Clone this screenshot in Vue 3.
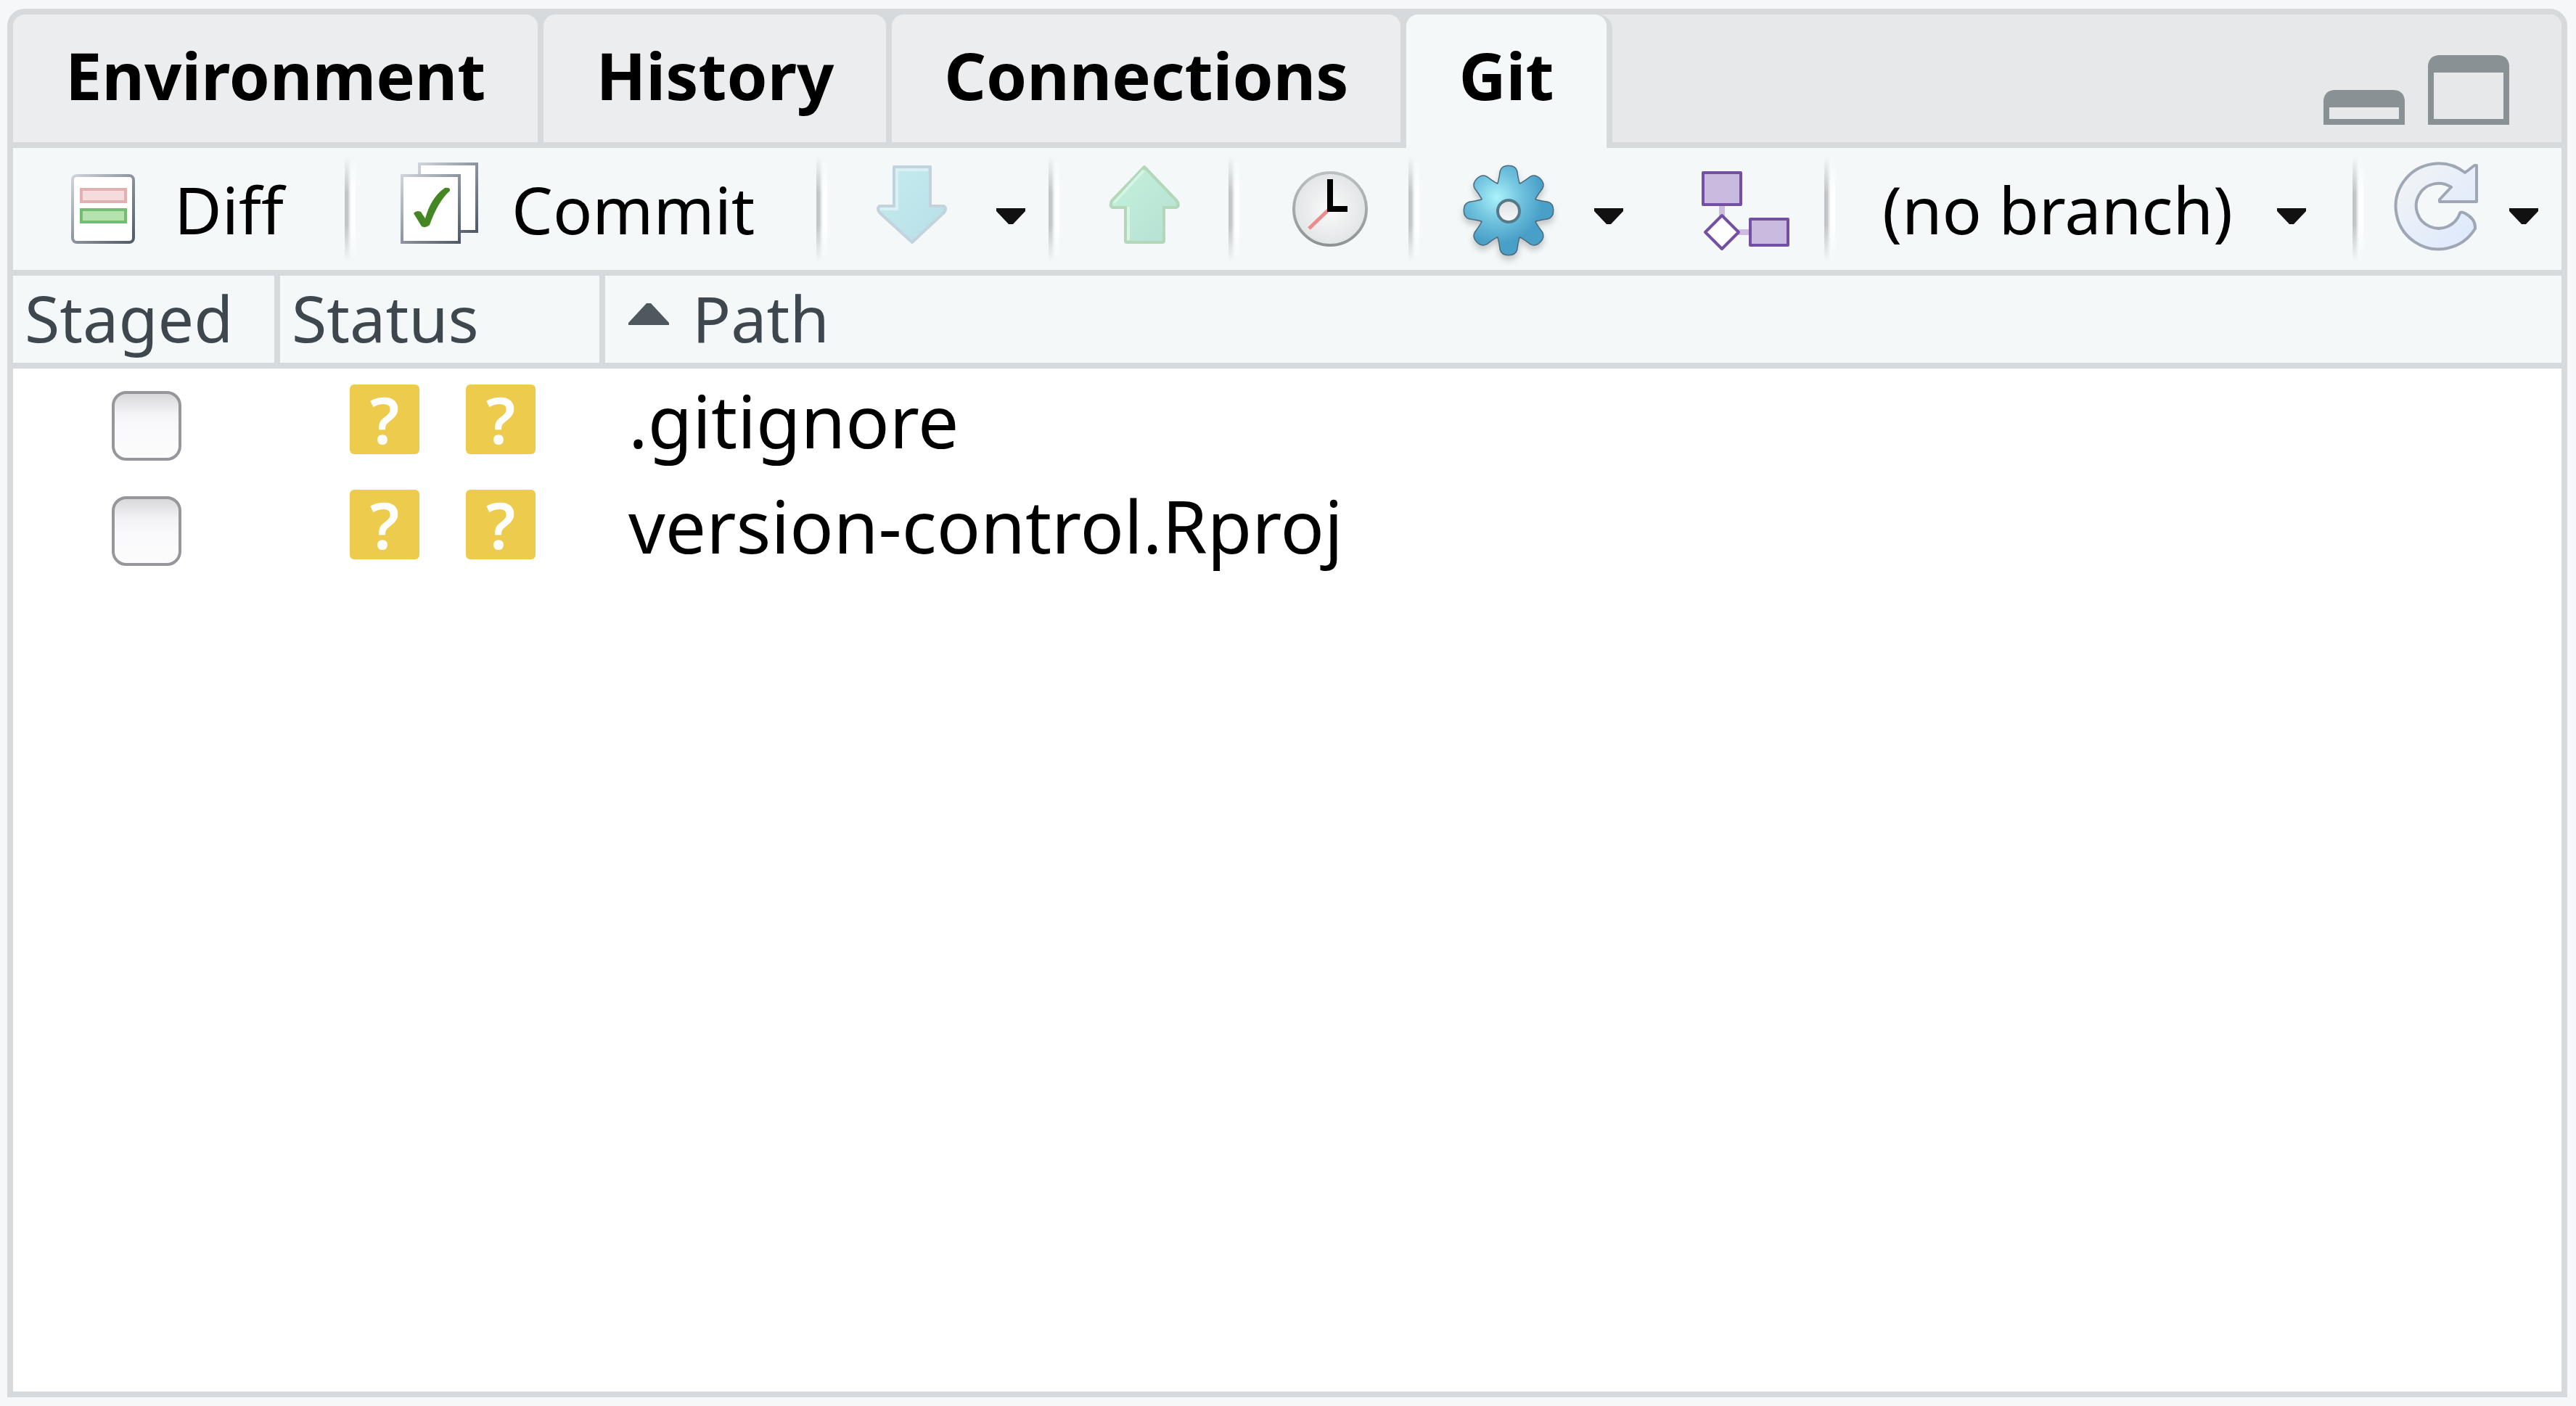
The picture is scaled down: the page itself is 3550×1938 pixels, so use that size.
<script setup>
import { ref } from 'vue'

const tabs = ['Environment', 'History', 'Connections', 'Git']
const active = ref('Git')

const files = ref([
  { path: '.gitignore', staged: false },
  { path: 'version-control.Rproj', staged: false },
])

const teeth = [0, 45, 90, 135, 180, 225, 270, 315]
const tooth = 'M-16 -34 L-14 -38 Q-12 -46 -11 -54 Q-9 -61 0 -61 Q9 -61 11 -54 Q12 -46 14 -38 L16 -34 Z'
</script>

<template>
  <main class="page">
    <section class="panel">
      <header class="strip">
        <nav class="tabs" role="tablist">
          <button
            v-for="tab in tabs"
            :key="tab"
            type="button"
            role="tab"
            class="tab"
            :class="{ active: tab === active }"
            :aria-selected="tab === active"
            @click="active = tab"
          >{{ tab }}</button>
        </nav>
        <div class="window-buttons">
          <button type="button" aria-label="Minimize">
            <svg width="112" height="96" viewBox="0 0 112 96">
              <path fill="#8a9194" fill-rule="evenodd" d="M0 96V62Q2 48 16 48H96Q110 48 112 62V96ZM8 72V88H104V72Z" />
            </svg>
          </button>
          <button type="button" aria-label="Maximize">
            <svg width="112" height="96" viewBox="0 0 112 96">
              <path fill="#8a9194" fill-rule="evenodd" d="M0 96V14Q2 0 16 0H96Q110 0 112 14V96ZM8 24V88H104V24Z" />
            </svg>
          </button>
        </div>
      </header>

      <div class="toolbar" role="toolbar">
        <div class="group">
          <button type="button" class="tool labelled diff">
            <svg class="icon" viewBox="72 224 128 128">
              <defs>
                <linearGradient id="edge" x1="0" y1="0" x2="1" y2="1">
                  <stop offset="0" stop-color="#d0d4da" />
                  <stop offset="0.5" stop-color="#8d949f" />
                  <stop offset="1" stop-color="#505a68" />
                </linearGradient>
              </defs>
              <rect x="100" y="242" width="84" height="92" rx="6" fill="#fff" stroke="url(#edge)" stroke-width="4" />
              <rect x="112" y="261" width="61" height="17" fill="#f5dcdc" stroke="#e2b0b0" stroke-width="4" />
              <rect x="112" y="289" width="61" height="17" fill="#b5e3ad" stroke="#74bb74" stroke-width="4" />
            </svg>
            <span>Diff</span>
          </button>
        </div>
        <i class="separator" />

        <div class="group">
          <button type="button" class="tool labelled commit">
            <svg class="icon" viewBox="537 224 128 128">
              <rect x="578" y="226" width="79" height="93" fill="#fff" stroke="url(#edge)" stroke-width="4" />
              <rect x="554" y="242" width="79" height="92" fill="#fff" stroke="url(#edge)" stroke-width="4" />
              <path fill="#448722" d="M570 294Q574 289 580 292L586 301Q594 272 613 259Q621 258 620 263Q604 277 592 310Q587 315 581 312Z" />
            </svg>
            <span>Commit</span>
          </button>
        </div>
        <i class="separator" />

        <div class="group pull">
          <button type="button" class="tool" aria-label="Pull">
            <svg class="icon" viewBox="1193 224 128 128">
              <defs>
                <linearGradient id="pull-fill" x1="0" y1="0" x2="1" y2="1">
                  <stop offset="0" stop-color="#c6ecf0" />
                  <stop offset="1" stop-color="#b6dfe6" />
                </linearGradient>
              </defs>
              <path d="M1232 230H1282V284H1301Q1305 287 1301 293L1257 334L1212 293Q1208 287 1212 284H1232Z" fill="url(#pull-fill)" stroke="#c3d3dd" stroke-width="4" stroke-linejoin="round" />
              <path d="M1213 288H1236V234H1279" fill="none" stroke="#d9f1f4" stroke-width="4" />
            </svg>
          </button>
          <button type="button" class="tool" aria-label="Pull options">
            <svg class="caret" viewBox="0 224 40 128"><path d="M0 287H40V291L23 309H17L0 291Z" /></svg>
          </button>
        </div>
        <i class="separator" />

        <div class="group single">
          <button type="button" class="tool" aria-label="Push">
            <svg class="icon" viewBox="1513 224 128 128">
              <defs>
                <linearGradient id="push-fill" x1="0" y1="0" x2="1" y2="1">
                  <stop offset="0" stop-color="#c4f1dc" />
                  <stop offset="1" stop-color="#b6e0d3" />
                </linearGradient>
              </defs>
              <path d="M1577 230L1622 277Q1626 284 1621 286H1604V332Q1604 334 1602 334H1553Q1551 334 1551 332V286H1533Q1529 284 1532 277Z" fill="url(#push-fill)" stroke="#b2d7b9" stroke-width="4" stroke-linejoin="round" />
              <path d="M1576 235L1535 280M1555 285V331" fill="none" stroke="#d4f5e4" stroke-width="4" />
            </svg>
          </button>
        </div>
        <i class="separator" />

        <div class="group single">
          <button type="button" class="tool" aria-label="History">
            <svg class="icon" viewBox="1761 224 128 128">
              <defs>
                <radialGradient id="clock-fill">
                  <stop offset="0" stop-color="#fafafa" />
                  <stop offset="1" stop-color="#e2e5e6" />
                </radialGradient>
                <linearGradient id="clock-edge" x1="0" y1="0" x2="0" y2="1">
                  <stop offset="0" stop-color="#bcc0c1" />
                  <stop offset="1" stop-color="#8f9394" />
                </linearGradient>
              </defs>
              <circle cx="1833" cy="288" r="50" fill="url(#clock-fill)" stroke="url(#clock-edge)" stroke-width="4" />
              <path d="M1831 289L1804 315" stroke="#ea8c8c" stroke-width="5" />
              <path d="M1833 247V288H1857" fill="none" stroke="#000" stroke-width="8" />
            </svg>
          </button>
        </div>
        <i class="separator" />

        <div class="group more">
          <button type="button" class="tool" aria-label="More">
            <svg class="icon" viewBox="2017 224 128 128">
              <defs>
                <radialGradient id="gear-fill" gradientUnits="userSpaceOnUse" cx="-16" cy="-18" r="64">
                  <stop offset="0" stop-color="#abf3fb" />
                  <stop offset="0.5" stop-color="#73c4df" />
                  <stop offset="1" stop-color="#489fc8" />
                </radialGradient>
                <linearGradient id="hole-fill" x1="0" y1="0" x2="0" y2="1">
                  <stop offset="0" stop-color="#dadddf" />
                  <stop offset="1" stop-color="#fbfbfb" />
                </linearGradient>
              </defs>
              <g transform="translate(2079 290)">
                <g class="gear-shadow" fill="#4a6b7c" stroke="#4a6b7c" stroke-width="3" stroke-linejoin="round">
                  <circle r="40" />
                  <path v-for="a in teeth" :key="a" :d="tooth" :transform="`rotate(${a})`" />
                </g>
                <mask id="gear-shape">
                  <circle r="39" fill="#fff" />
                  <path v-for="a in teeth" :key="a" :d="tooth" fill="#fff" :transform="`rotate(${a})`" />
                </mask>
                <rect x="-64" y="-64" width="128" height="128" fill="url(#gear-fill)" mask="url(#gear-shape)" />
                <circle cy="1" r="15" fill="url(#hole-fill)" stroke="#56798a" stroke-width="4" />
              </g>
            </svg>
          </button>
          <button type="button" class="tool" aria-label="More options">
            <svg class="caret" viewBox="0 224 40 128"><path d="M0 287H40V291L23 309H17L0 291Z" /></svg>
          </button>
          <button type="button" class="tool new-branch" aria-label="New branch">
            <svg class="icon" viewBox="2342 224 128 128">
              <path d="M2374 284V300M2394 320H2412" stroke="#cbbce0" stroke-width="8" />
              <g fill="#c9badf" stroke="#7450a3" stroke-width="4" stroke-linejoin="round">
                <rect x="2348" y="238" width="52" height="44" />
                <rect x="2413" y="302" width="52" height="36" />
                <path fill="#fff" d="M2374 297L2397 320L2374 343L2351 320Z" />
              </g>
            </svg>
          </button>
        </div>
        <i class="separator" />

        <div class="group branch">
          <select id="branch" class="branch-select" aria-label="Branch">
            <option>(no branch)</option>
          </select>
          <label for="branch" class="caret-label">
            <svg class="caret" viewBox="0 224 40 128"><path d="M0 287H40V291L23 309H17L0 291Z" /></svg>
          </label>
        </div>
        <i class="separator" />

        <div class="group refresh">
          <button type="button" class="tool" aria-label="Refresh">
            <svg class="icon" viewBox="148 224 128 128">
              <defs>
                <linearGradient id="refresh-fill" x1="0" y1="0" x2="1" y2="1">
                  <stop offset="0" stop-color="#f3f5f5" />
                  <stop offset="1" stop-color="#dce8fd" />
                </linearGradient>
              </defs>
              <path d="M247 238A59 59 0 1 0 261 315Q262 302 247 294Q241 291 240 294A31 31 0 1 1 228 258L212 275V278H263V228H260L247 238Z" fill="url(#refresh-fill)" stroke="#a0a7b4" stroke-width="4" stroke-linejoin="round" />
            </svg>
          </button>
          <button type="button" class="tool" aria-label="Refresh options">
            <svg class="caret" viewBox="0 224 40 128"><path d="M0 287H40V291L23 309H17L0 291Z" /></svg>
          </button>
        </div>
      </div>

      <table class="files">
        <colgroup>
          <col class="col-staged" />
          <col class="col-status" />
          <col />
        </colgroup>
        <thead>
          <tr>
            <th scope="col">Staged</th>
            <th scope="col">Status</th>
            <th scope="col" class="sorted" aria-sort="ascending">
              <svg width="56" height="30" viewBox="0 0 56 30"><path fill="#50585f" d="M25 0H31L56 27V30H0V27Z" /></svg>Path
            </th>
          </tr>
        </thead>
        <tbody>
          <tr v-for="file in files" :key="file.path">
            <td class="staged">
              <input v-model="file.staged" type="checkbox" :aria-label="`Stage ${file.path}`" />
            </td>
            <td class="status">
              <div class="badges"><span>?</span><span>?</span></div>
            </td>
            <td class="path">{{ file.path }}</td>
          </tr>
        </tbody>
      </table>
    </section>
  </main>
</template>

<style>
body {
  margin: 0;
  background: #f6f7f9;
}
</style>

<style scoped>
.page {
  --line: #d6dadc;
  --surface: #f4f8f9;
  box-sizing: border-box;
  display: flex;
  min-height: 100vh;
  padding: 12px 12px 12px 10px;
  font-family: "Noto Sans", "Open Sans", sans-serif;
  color: #000;
}

.panel {
  flex: 1;
  min-width: 0;
  border: 8px solid var(--line);
  border-radius: 24px 24px 0 0;
  background: #fff;
  overflow: hidden;
}

button {
  margin: 0;
  padding: 0;
  border: 0;
  background: none;
  font: inherit;
  color: inherit;
}

svg {
  display: block;
}

.strip {
  display: flex;
  justify-content: space-between;
  height: 184px;
  background: #e6e8ea;
  box-shadow: inset 0 -8px var(--line);
}

.tabs {
  display: flex;
  gap: 8px;
  padding-right: 8px;
  border-top-right-radius: 20px;
  background: var(--line);
}

.tab {
  height: 176px;
  padding: 0 72px 10px;
  border-radius: 16px 16px 0 0;
  background: #ebedef;
  font-size: 90px;
  font-weight: 700;
  line-height: 166px;
}

.tab.active {
  height: 184px;
  padding-bottom: 18px;
  background: var(--surface);
}

.window-buttons {
  display: flex;
  gap: 32px;
  padding: 56px 72px 0 0;
}

.window-buttons button {
  height: 96px;
}

.toolbar {
  display: grid;
  grid-template-columns: 457px 16px 634px 16px 304px 16px 232px 16px 232px 16px 557px 16px 712px 16px 1fr;
  align-items: center;
  height: 168px;
  border-bottom: 8px solid var(--line);
  background: var(--surface);
  font-size: 90px;
}

.group {
  display: flex;
  align-items: center;
  gap: 52px;
}

.tool {
  flex: none;
}

.labelled {
  display: flex;
  align-items: center;
  gap: 40px;
}

.labelled span {
  line-height: 128px;
}

.icon {
  width: 128px;
  height: 128px;
  overflow: visible;
}

.caret {
  width: 40px;
  height: 128px;
  fill: #111;
}

.diff {
  padding-left: 54px;
}

.commit {
  padding-left: 46px;
}

.pull,
.single {
  padding-left: 52px;
}

.more {
  padding-left: 60px;
}

.branch {
  gap: 60px;
  padding-left: 64px;
}

.new-branch {
  margin-left: 52px;
}

.refresh {
  gap: 32px;
  padding-left: 40px;
}

.gear-shadow {
  filter: drop-shadow(0 6px 4px #0003);
}

.branch-select {
  appearance: none;
  margin: 0;
  padding: 0;
  border: 0;
  background: none;
  font: inherit;
  line-height: 128px;
  color: inherit;
}

.separator {
  height: 144px;
  background: linear-gradient(to right, #c2c5c7 0 4px, #f4f8f9 8px, #fff 10px 14px, #f4f8f9);
  mask: linear-gradient(transparent, #000 35% 65%, transparent);
}

.files {
  width: 100%;
  table-layout: fixed;
  border-collapse: separate;
  border-spacing: 0;
}

.col-staged {
  width: 368px;
}

.col-status {
  width: 448px;
}

th {
  box-sizing: border-box;
  height: 128px;
  padding: 0 0 4px 16px;
  border-bottom: 8px solid var(--line);
  background: var(--surface);
  box-shadow: inset -8px 0 var(--line);
  font-size: 88px;
  font-weight: 400;
  line-height: 116px;
  text-align: left;
  color: #3f474e;
}

th.sorted {
  padding-left: 32px;
  box-shadow: none;
}

th svg {
  display: inline-block;
  margin-right: 32px;
  vertical-align: 24px;
}

td {
  height: 145px;
  padding: 0;
  vertical-align: top;
}

.staged input {
  appearance: none;
  display: block;
  box-sizing: border-box;
  width: 96px;
  height: 96px;
  margin: 31px 0 0 136px;
  border: 4px solid #97979b;
  border-radius: 20px;
  background: linear-gradient(#d8d8d9, #f3f3f5 30%, #f9f9fb 50%, #fcfcfd);
}

.badges {
  display: flex;
  gap: 64px;
  padding: 22px 0 0 96px;
}

.badges span {
  width: 96px;
  height: 96px;
  border-radius: 6px;
  background: #eccb4d;
  font-size: 88px;
  font-weight: 600;
  line-height: 96px;
  text-align: center;
  color: #fff;
}

.path {
  padding-left: 32px;
  font-size: 100px;
  line-height: 143px;
}
</style>
